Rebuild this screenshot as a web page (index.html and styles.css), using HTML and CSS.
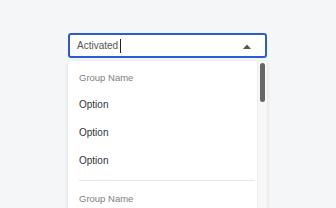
FILE: index.html
```html
<!DOCTYPE html>
<html>
<head>
<meta charset="utf-8">
<link rel="stylesheet" href="styles.css">
</head>
<body>
<div class="wrap">
  <div class="select">
    <div class="field">
      <span class="value">Activated</span><span class="caret"></span>
      <svg class="arrow" width="8" height="5" viewBox="0 0 8 5"><path d="M0 5 L4 0.5 L8 5 Z" fill="#555"/></svg>
    </div>
    <div class="menu">
      <div class="list">
        <div class="group">Group Name</div>
        <div class="option">Option</div>
        <div class="option">Option</div>
        <div class="option">Option</div>
        <div class="divider"></div>
        <div class="group">Group Name</div>
      </div>
      <div class="scrollbar"><div class="thumb"></div></div>
    </div>
  </div>
</div>
</body>
</html>
```
FILE: styles.css
```css
html, body {
  margin: 0;
  padding: 0;
  background: #f5f6f8;
  font-family: "Liberation Sans", Arial, sans-serif;
  height: 208px;
  overflow: hidden;
}
.wrap {
  padding: 33px 0 0 68px;
}
.select {
  width: 199px;
}
.field {
  box-sizing: border-box;
  height: 25px;
  border: 2px solid #2d5bd6;
  border-radius: 3px;
  background: #fff;
  display: flex;
  align-items: center;
  padding: 0 0 0 7px;
  position: relative;
}
.value {
  font-size: 10px;
  color: #555;
}
.caret {
  width: 1px;
  height: 14px;
  background: #222;
  margin-left: 2px;
}
.arrow {
  position: absolute;
  right: 14px;
  top: 9px;
}
.menu {
  margin-top: 3px;
  background: #fff;
  box-shadow: 0 1px 4px rgba(0,0,0,0.12);
  border-radius: 3px;
  display: flex;
  height: 150px;
  overflow: hidden;
}
.list {
  flex: 1;
  padding: 6px 2px 0 11px;
}
.group {
  font-size: 9.5px;
  color: #808080;
  height: 22px;
  line-height: 22px;
}
.group:first-child {
  height: 24px;
}
.option {
  font-size: 10px;
  color: #333;
  height: 28px;
  line-height: 28px;
}
.divider {
  height: 1px;
  background: #e6e6e6;
  margin: 5px 0 7px;
}
.scrollbar {
  width: 10px;
  background: #f7f7f7;
  border-left: 1px solid #eee;
  padding: 2px 0 0 2px;
  box-sizing: border-box;
}
.thumb {
  width: 5px;
  height: 39px;
  background: #666;
  border-radius: 3px;
}
```
